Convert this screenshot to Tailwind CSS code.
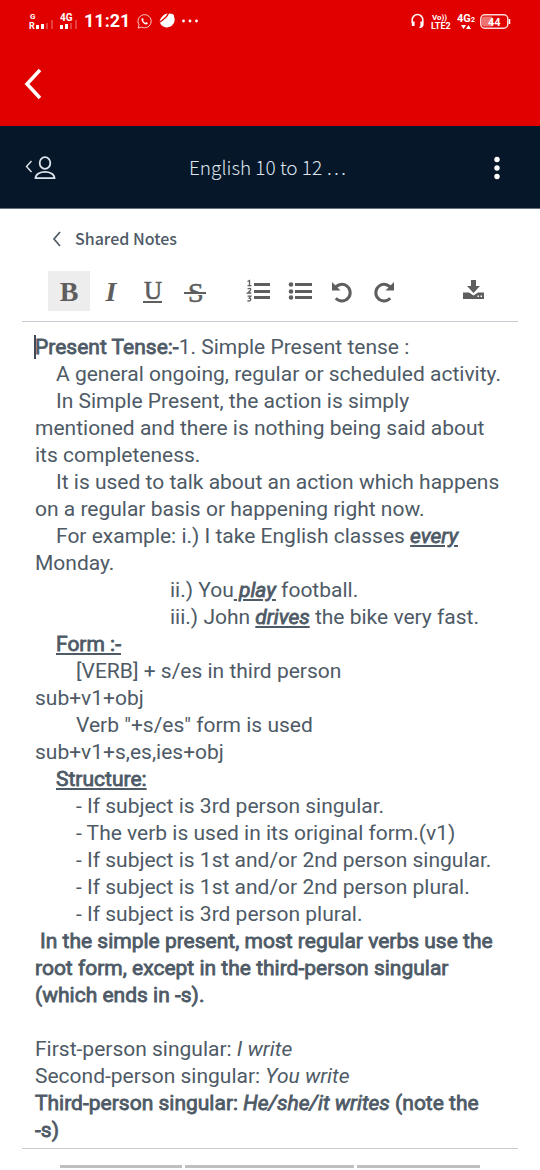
<!DOCTYPE html>
<html lang="en">
<head>
<meta charset="utf-8">
<meta name="viewport" content="width=device-width, initial-scale=1">
<title>Shared Notes</title>
<script src="https://cdn.jsdelivr.net/npm/@tailwindcss/browser@4"></script>
</head>
<body class="flex min-h-screen flex-col bg-white font-['Roboto',sans-serif] text-[#4e5a66]">
  <header class="bg-[#e00000] text-white">
    <div class="flex h-[42px] items-center justify-between px-[29px]">
      <div class="flex items-center">
        <svg class="h-5 w-6" viewBox="0 0 24 20" fill="currentColor" aria-label="Signal 1"><text x="1" y="8" font-size="8" font-weight="700">G</text><text x="0" y="18" font-size="9" font-weight="700">R</text><path d="M7 14h3v4H7zM12 13h3v5h-3z"/><path d="M17 12h2v6h-2zM22 9h2v9h-2z" opacity=".25"/></svg>
        <svg class="ml-[7px] h-5 w-[18px]" viewBox="0 0 18 20" fill="currentColor" aria-label="Signal 2"><text x="0" y="10" font-size="10" font-weight="700">4G</text><path d="M0 14h3v4H0zM5 13h3v5H5z"/><path d="M10 12h2v6h-2zM15 9h2v9h-2z" opacity=".25"/></svg>
        <span class="ml-[6px] text-lg font-bold leading-5">11:21</span>
        <svg class="ml-[7px] size-[15px]" viewBox="0 0 16 16" fill="none" stroke="currentColor" stroke-width="1" stroke-opacity=".85"><path d="M1.200 15l1-3.500A7 7 0 1 1 5 14z"/><path d="M5.200 4.500c-1 1.200-.2 3.200 1.300 4.800 1.600 1.700 3.600 2.600 4.800 1.200l.2-1-1.800-.9-.8.900C8 9 7 8 6.400 7l.8-.8-.8-1.700z" fill="currentColor" stroke="none"/></svg>
        <svg class="ml-[7px] size-4" viewBox="0 0 16 16"><path d="M15.300 4.500A7.500 7.500 0 1 1 .6 9C1 5.500 4 1 9 .5L12.500.8z" fill="#fff"/><path d="M9.500 0C8 4.500 5 6.500 0 9.500" fill="none" stroke="#e00000" stroke-width="1.300"/><path d="M12.800.8c-.4 1.700.4 3 2.200 3.600C15.500 2.500 14.500 1 12.800.8z" fill="#fff"/></svg>
        <svg class="ml-[7px] size-4" viewBox="0 0 16 16" fill="currentColor"><circle cx="1.500" cy="8" r="1.400"/><circle cx="8" cy="8" r="1.400"/><circle cx="14.500" cy="8" r="1.400"/></svg>
      </div>
      <div class="flex items-center">
        <svg class="h-4 w-[13px]" viewBox="0 0 13 16" fill="none" stroke="currentColor" stroke-width="1.500"><path d="M1.200 10V7a5.300 5.500 0 0 1 10.600 0v4q0 3-3.300 3.500"/><path d="M2.200 8.500v4.500M10.800 8.500v4.500" stroke-width="2.800"/></svg>
        <svg class="ml-[7px] h-5 w-[21px]" viewBox="0 0 21 20" fill="currentColor" aria-label="VoLTE 2"><text x="1" y="9" font-size="8" font-weight="700">Vo))</text><text x="0" y="18" font-size="9" font-weight="700">LTE2</text></svg>
        <svg class="ml-[5px] h-5 w-[19px]" viewBox="0 0 19 20" fill="currentColor" aria-label="4G"><text x="0" y="11" font-size="11" font-weight="700">4G</text><text x="14" y="11" font-size="7" font-weight="700">2</text><path d="M4 14h5l-2.500 4zM9 18h5l-2.500-4z"/></svg>
        <svg class="ml-[4px] h-[15px] w-[31px]" viewBox="0 0 31 15" fill="none"><rect x=".8" y=".8" width="27" height="13.400" rx="4" stroke="#fff" stroke-opacity=".85" stroke-width="1.500"/><path d="M4 2.500h8v10H4q-2 0-2-2v-6q0-2 2-2z" fill="#fff" fill-opacity=".45"/><path d="M29.500 5v5" stroke="#fff" stroke-width="1.500"/><text x="8" y="11.500" font-size="11" font-weight="700" fill="#fff">44</text></svg>
      </div>
    </div>
    <div class="flex h-[84px] items-center pl-5">
      <button type="button" aria-label="Back" class="flex size-8 items-center"><svg class="size-8" viewBox="0 0 32 32" fill="none" stroke="currentColor" stroke-width="3.500"><path d="M20 2L7 16l13 14"/></svg></button>
    </div>
  </header>

  <nav class="flex h-[83px] items-center justify-between border-b border-[#67717c] bg-[#061729] pl-6 pr-[39px] pt-[2px] font-['Noto_Sans_CJK_JP',sans-serif] text-[#dfe5ed]">
    <button type="button" aria-label="Users" class="w-8"><svg class="h-6 w-8" viewBox="0 0 32 24" fill="none" stroke="currentColor" stroke-width="1.800"><path d="M7.500 5L2.500 10.500l5 5.500" stroke-width="1.400"/><ellipse cx="21" cy="7" rx="5.300" ry="5.800"/><path d="M11.500 22.200c0-8.500 19-8.500 19 0z"/></svg></button>
    <h1 class="pb-[2px] text-[19px] font-light leading-8">English 10 to 12 …</h1>
    <button type="button" aria-label="More options" class="flex w-[22px] justify-end"><svg class="h-6 w-2" viewBox="0 0 8 24" fill="#fff"><circle cx="4" cy="3.500" r="2.700"/><circle cx="4" cy="12" r="2.700"/><circle cx="4" cy="20.500" r="2.700"/></svg></button>
  </nav>

  <main class="mx-[22px]">
    <button type="button" class="ml-[30px] mt-[15px] flex h-7 items-center gap-[14px] font-['Noto_Sans_CJK_JP',sans-serif] text-base font-medium leading-7">
      <svg class="mt-[2px] h-4 w-[9px]" viewBox="0 0 9 16" fill="none" stroke="currentColor" stroke-width="1.700"><path d="M8 1L2 8l6 7"/></svg>Shared Notes
    </button>
    <div role="toolbar" aria-label="Formatting" class="mt-[19px] flex h-10 pl-[26px] pr-6 font-['Liberation_Serif',serif] text-[28px] font-bold leading-[42px] text-[#5e5e5e]">
      <button type="button" aria-label="Bold" aria-pressed="true" class="w-[42px] bg-[#ededed]">B</button>
      <button type="button" aria-label="Italic" class="w-[42px] italic">I</button>
      <button type="button" aria-label="Underline" class="flex w-[42px] items-center justify-center"><svg class="h-10 w-6" viewBox="0 0 24 40" fill="currentColor"><text x="3" y="28" font-size="25" font-weight="400" stroke="currentColor" stroke-width=".6">U</text><path d="M2 30h19v2H2z"/></svg></button>
      <button type="button" aria-label="Strikethrough" class="flex w-[42px] items-center justify-center"><svg class="h-10 w-6" viewBox="0 0 24 40" fill="currentColor"><text x="5" y="31" font-size="28" font-weight="400" stroke="currentColor" stroke-width=".6">S</text><path d="M1 21h22v3H1z" fill="#fff"/><path d="M1 21h22v2H1z"/></svg></button>
      <button type="button" aria-label="Ordered list" class="ml-[21px] flex w-[42px] items-center justify-center"><svg class="h-6 w-6" viewBox="0 0 24 24" fill="currentColor"><path d="M8 4h16v3H8zM8 11h16v3H8zM8 17h16v3H8z"/><path d="M1.500 2.500L3.500 1.500v5M1.500 6.700h4M1.500 10q3.500-1.500 3.200.5-.5 1.500-3 3.500h3.600M1.500 17.200h3.300l-1.600 2q2.300.5 1.200 2-1.200 1.300-3 .4" fill="none" stroke="currentColor" stroke-width="1.300"/></svg></button>
      <button type="button" aria-label="Unordered list" class="flex w-[42px] items-center justify-center"><svg class="h-6 w-6" viewBox="0 0 24 24" fill="currentColor"><circle cx="3" cy="5.500" r="2.300"/><circle cx="3" cy="12.500" r="2.300"/><circle cx="3" cy="18.500" r="2.300"/><path d="M7 4h17v3H7zM7 11h17v3H7zM7 17h17v3H7z"/></svg></button>
      <button type="button" aria-label="Undo" class="flex w-[42px] items-center justify-center pt-[2px]"><svg class="h-6 w-6" viewBox="0 0 24 24" fill="none" stroke="currentColor" stroke-width="3"><path d="M5 8a8.300 8.300 0 1 1 .8 10.300"/><path d="M2 2v8.500h8.500z" fill="currentColor" stroke="none"/></svg></button>
      <button type="button" aria-label="Redo" class="flex w-[42px] items-center justify-center pt-[2px]"><svg class="h-6 w-6" viewBox="0 0 24 24" fill="none" stroke="currentColor" stroke-width="3"><path d="M19 8a8.300 8.300 0 1 0-.8 10.300"/><path d="M22 2v8.500h-8.500z" fill="currentColor" stroke="none"/></svg></button>
      <button type="button" aria-label="Export" class="ml-auto flex w-[42px] items-center justify-center"><svg class="h-6 w-6" viewBox="0 0 24 24" fill="currentColor"><path d="M10 1h5v6h4l-6.500 7L6 7h4z"/><path d="M2 13.500h6l4.500 3 4.500-3h6V20H2zM16.500 16.500V18H18v-1.500zm3 0V18H21v-1.500z" fill-rule="evenodd"/></svg></button>
    </div>
    <div role="textbox" aria-label="Notes" aria-multiline="true" contenteditable="true" class="relative mt-[10px] border-y border-[#c8ccd2] pb-1 pl-[13px] pr-4 pt-3 text-[21px] leading-[27px] outline-none">
      <span class="absolute left-3 top-[13px] h-6 w-[2px] bg-[#3f4b58]"></span>
      <p><b class="font-normal [-webkit-text-stroke:0.8px]">Present Tense:-</b>1. Simple Present tense :</p>
      <p class="indent-[21px]">A general ongoing, regular or scheduled activity.</p>
      <p class="indent-[21px]">In Simple Present, the action is simply<br>mentioned and there is nothing being said about its completeness.</p>
      <p class="indent-[21px]">It is used to talk about an action which happens on a regular basis or happening right now.</p>
      <p class="indent-[21px]">For example: i.) I take English classes <b class="font-normal italic underline [-webkit-text-stroke:0.8px]">every</b> Monday.</p>
      <p class="indent-[135px]">ii.) You<b class="font-normal italic underline [-webkit-text-stroke:0.8px]"> play</b> football.</p>
      <p class="indent-[135px]">iii.) John <b class="font-normal italic underline [-webkit-text-stroke:0.8px]">drives</b> the bike very fast.</p>
      <p class="indent-[21px]"><b class="font-normal underline [-webkit-text-stroke:0.8px]">Form :-</b></p>
      <p class="indent-[41px]">[VERB] + s/es in third person<br>sub+v1+obj</p>
      <p class="indent-[41px]">Verb "+s/es" form is used<br>sub+v1+s,es,ies+obj</p>
      <p class="indent-[21px]"><b class="font-normal underline [-webkit-text-stroke:0.8px]">Structure:</b></p>
      <p class="indent-[41px]">- If subject is 3rd person singular.</p>
      <p class="indent-[41px]">- The verb is used in its original form.(v1)</p>
      <p class="indent-[41px]">- If subject is 1st and/or 2nd person singular.</p>
      <p class="indent-[41px]">- If subject is 1st and/or 2nd person plural.</p>
      <p class="indent-[41px]">- If subject is 3rd person plural.</p>
      <p class="indent-[5px] [-webkit-text-stroke:0.8px]">In the simple present, most regular verbs use the root form, except in the third-person singular (which ends in -s).</p>
      <p><br></p>
      <p>First-person singular: <i>I write</i></p>
      <p>Second-person singular: <i>You write</i></p>
      <p class="[-webkit-text-stroke:0.8px]">Third-person singular: <i>He/she/it writes</i> (note the<br>-s)</p>
    </div>
  </main>
  <footer class="mx-[60px] mt-4 grid grid-cols-[122fr_169fr_123fr] gap-[3px]">
    <div class="h-[3px] bg-[#bfbfbf]"></div><div class="h-[3px] bg-[#bfbfbf]"></div><div class="h-[3px] bg-[#bfbfbf]"></div>
  </footer>
</body>
</html>
